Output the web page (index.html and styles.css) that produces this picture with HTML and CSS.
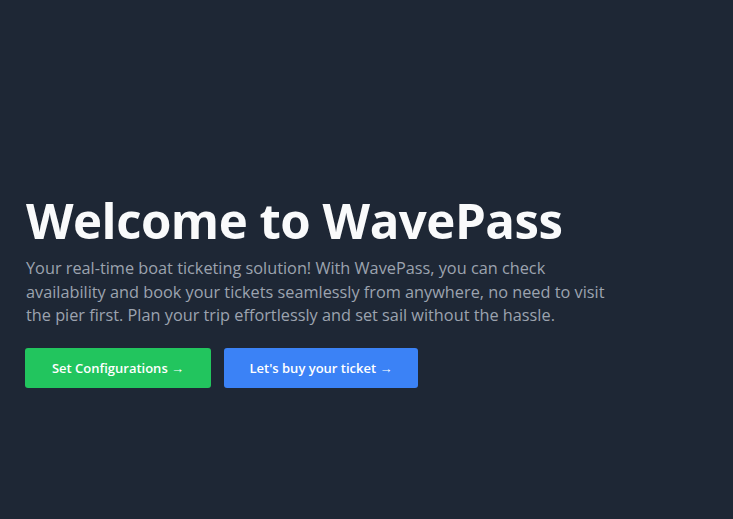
FILE: index.html
```html
<!DOCTYPE html>
<html lang="en">
<head>
<meta charset="utf-8">
<title>WavePass</title>
<link rel="stylesheet" href="styles.css">
</head>
<body>
<main class="hero">
  <h1 class="title">Welcome to WavePass</h1>
  <p class="lead">Your real-time boat ticketing solution! With WavePass, you can check availability and book your tickets seamlessly from anywhere, no need to visit the pier first. Plan your trip effortlessly and set sail without the hassle.</p>
  <div class="actions">
    <a class="btn btn-green" href="#">Set Configurations →</a>
    <a class="btn btn-blue" href="#">Let's buy your ticket →</a>
  </div>
</main>
</body>
</html>
```
FILE: styles.css
```css
html, body {
  margin: 0;
  height: 100%;
}
body {
  background: #1e2735;
  font-family: "Open Sans", "Noto Sans", sans-serif;
  color: #9ca3af;
}
.hero {
  box-sizing: border-box;
  height: 100%;
  padding: 190px 26px 0 25px;
}
.title {
  margin: 0 0 0 1px;
  font-size: 49.2px;
  line-height: 60px;
  font-weight: 700;
  color: #f9fafb;
  letter-spacing: -0.5px;
}
.lead {
  margin: 7px 0 0 1px;
  max-width: 600px;
  font-size: 16.3px;
  line-height: 23.7px;
  color: #9ca3af;
}
.actions {
  display: flex;
  gap: 13px;
  margin-top: 20px;
}
.btn {
  display: flex;
  align-items: center;
  justify-content: center;
  height: 40px;
  border-radius: 3px;
  color: #ffffff;
  text-decoration: none;
  font-size: 13px;
  font-weight: 600;
}
.btn-green {
  width: 186px;
  background: #22c55e;
}
.btn-blue {
  width: 194px;
  background: #3b82f6;
}
```
